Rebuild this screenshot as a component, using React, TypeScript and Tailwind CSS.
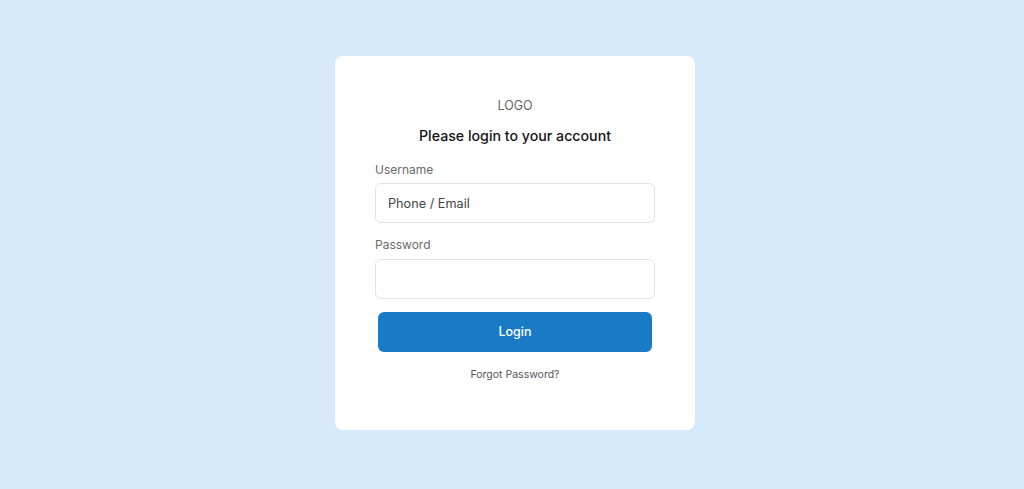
import React from 'react';

export default function App() {
  return (
    <div
      className="min-h-[489px] w-full bg-[#d6eafc] flex justify-center pt-[56px] pl-[6px]"
      style={{ fontFamily: 'Inter, "Noto Sans", sans-serif' }}
    >
      <div className="w-[360px] h-[374px] bg-white rounded-[8px] px-[40px] pt-[42px] flex flex-col">
        <div className="text-center text-[12.5px] leading-[16px] text-[#666]">LOGO</div>
        <h1 className="mt-[12px] text-center text-[14.2px] leading-[20px] font-medium text-[#141414]">
          Please login to your account
        </h1>

        <label className="mt-[16px] text-[12px] leading-[16px] text-[#6b6b6b]">Username</label>
        <input
          type="text"
          placeholder="Phone / Email"
          className="mt-[5px] h-[40px] w-full rounded-[6px] border border-[#e3e3e3] px-[12px] text-[12.7px] text-[#333] placeholder:text-[#444] focus:outline-none"
        />

        <label className="mt-[14px] text-[12px] leading-[16px] text-[#6b6b6b]">Password</label>
        <input
          type="password"
          className="mt-[6px] h-[40px] w-full rounded-[6px] border border-[#e3e3e3] px-[12px] text-[13px] focus:outline-none"
        />

        <button className="mt-[13px] mx-[3px] h-[40px] rounded-[6px] bg-[#197bc6] text-white text-[12.5px] font-medium">
          Login
        </button>

        <a className="mt-[16px] text-center text-[10.5px] leading-[14px] text-[#555]">Forgot Password?</a>
      </div>
    </div>
  );
}
